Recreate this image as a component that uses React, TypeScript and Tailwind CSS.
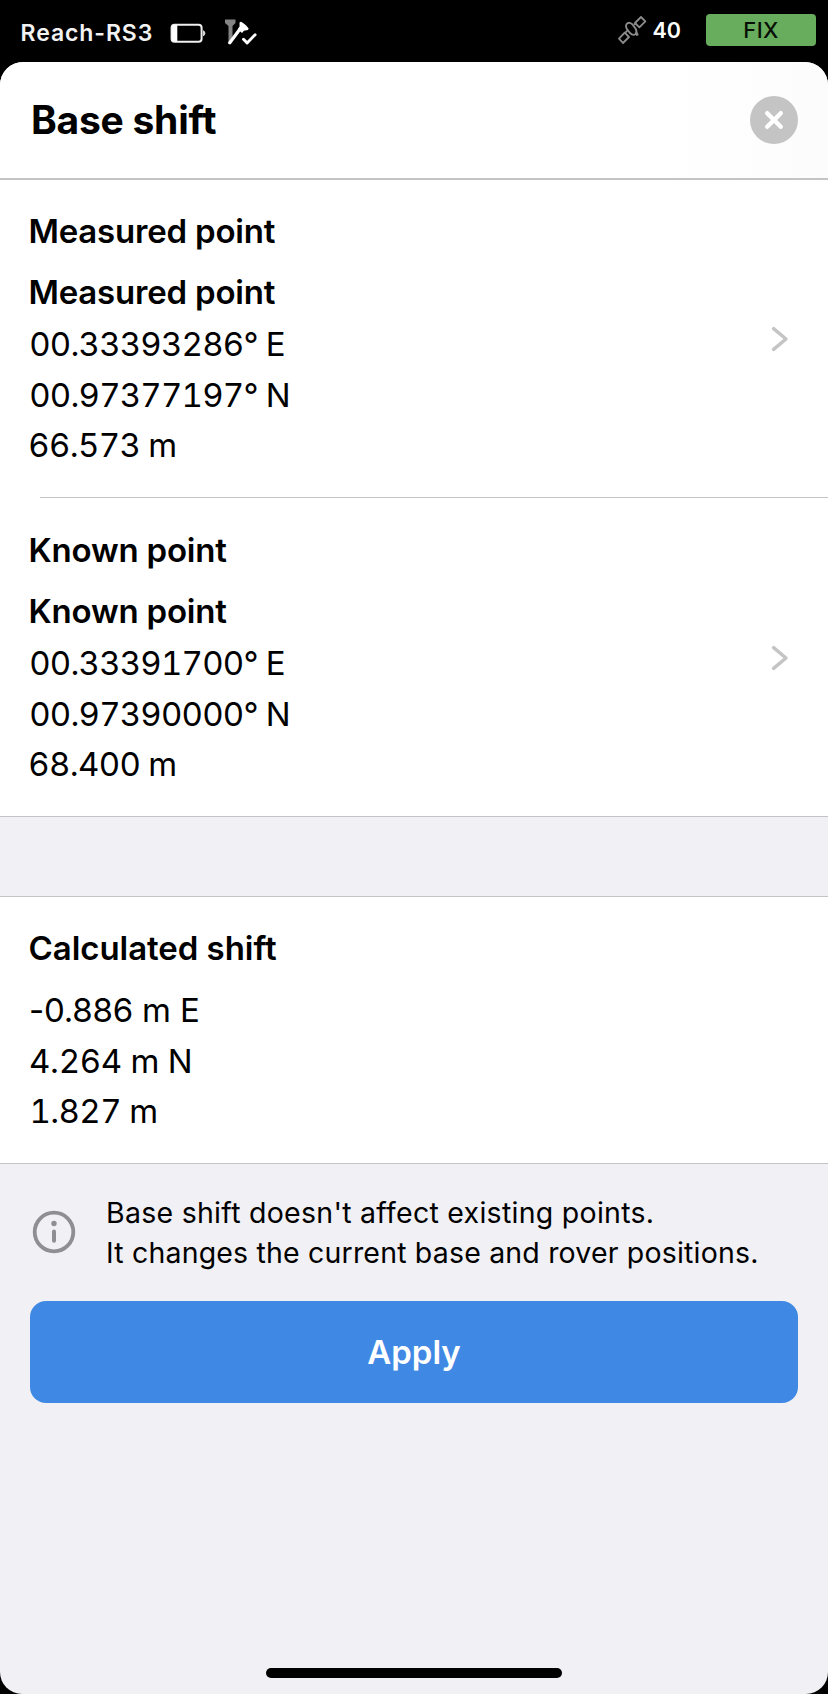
import React from "react";

function BatteryIcon() {
  return (
    <svg className="ml-[17px] h-[20px] w-[36px]" viewBox="0 0 36 20" fill="none">
      <rect x="1.6" y="1.8" width="30" height="17" rx="3" stroke="#f0f0f0" strokeWidth="2" />
      <path d="M4 2h3.300v16.500H4a2 2 0 0 1-2-2V4a2 2 0 0 1 2-2Z" fill="#fff" />
      <path d="M33 7.200c1.600.5 2.300 1.600 2.300 3s-.7 2.500-2.300 3Z" fill="#d8d8d8" />
    </svg>
  );
}

function SurveyIcon() {
  return (
    <svg className="ml-[18px] h-[28px] w-[34px]" viewBox="0 0 34 28" fill="none">
      <path d="M1 2.500h10.500v3.500l-3 3v13l-4 5V9L1 6Z" fill="#858585" />
      <path d="M5.800 25.800 16 12" stroke="#fff" strokeWidth="3.200" strokeLinecap="round" />
      <path d="M16.800 4.800c1.800.4 6.800 4.600 7.900 7l-.8 1.300-4 .6-1.800 2.300-4.300-3.600 1.800-3.200-.1-3.600Z" fill="#fff" />
      <path d="m19.500 22.300 3.600 3.600 8-8.200" stroke="#fff" strokeWidth="2.900" strokeLinecap="round" strokeLinejoin="round" />
    </svg>
  );
}

function SatelliteIcon() {
  return (
    <svg className="h-[30px] w-[30px]" viewBox="80 45 90 90" fill="none" stroke="#8c8c8c" strokeWidth="5.500" strokeLinejoin="round">
      <path d="m152 51 13 13-18 18-13-13Z" />
      <path d="m103 98 13 13-18 18-12-13Z" />
      <path d="M109 72c5-6 13-4 18 2l8 11c4 6 4 13 1 17-5 4-12 2-17-3l-8-10c-4-6-5-13-2-17Z" />
      <path d="m131 74 7-4M111 92l-6 6M139 98l3 6-5 1" />
    </svg>
  );
}

function Chevron() {
  return (
    <svg className="mr-[38px] h-[28px] w-[20px]" viewBox="0 0 20 28" fill="none">
      <path d="M3.600 3.600 16 14 3.600 24.400" stroke="#c4c4c4" strokeWidth="3.400" strokeLinecap="round" strokeLinejoin="round" />
    </svg>
  );
}

function PointDetails({ title, lines }: { title: string; lines: string[] }) {
  return (
    <div className="flex flex-1 flex-col pl-[28.500px]">
      <h2 className="text-[33px] leading-[40px] font-semibold tracking-[-0.2px]">{title}</h2>
      <h3 className="mt-[21px] text-[33px] leading-[40px] font-semibold tracking-[-0.2px]">{title}</h3>
      <div className="mt-[6.500px] pl-[0.700px] text-[33px] tracking-[-0.780px] tabular-nums">
        {lines.map((line) => (
          <p key={line} className="leading-[51px] last:-ml-px last:leading-[49px] last:tracking-[-0.650px]">{line}</p>
        ))}
      </div>
    </div>
  );
}

export default function App() {
  return (
    <div className="flex h-[1694px] w-[828px] flex-col overflow-hidden bg-black font-['Inter',sans-serif] text-black">
      <header className="flex h-[62px] shrink-0 items-start">
        <span className="mt-[19px] ml-[20.500px] text-[23px] leading-[28px] font-semibold tracking-[0.920px] text-[#f2f2f2]">Reach-RS3</span>
        <div className="mt-[23px]"><BatteryIcon /></div>
        <div className="mt-[17px]"><SurveyIcon /></div>
        <div className="mt-[15px] ml-auto"><SatelliteIcon /></div>
        <span className="mt-[16px] ml-[5.500px] w-[53.500px] text-[21.500px] leading-[28px] font-semibold text-white">40</span>
        <div className="mt-[14px] mr-[12px] flex h-[32px] w-[110px] items-center justify-center rounded-[4px] bg-[#68ac5d] text-[22px] leading-[32px] font-medium tracking-[0.3px] text-[#081005]">FIX</div>
      </header>

      <main className="flex flex-1 flex-col overflow-hidden rounded-t-[23px] rounded-b-[22px] bg-[#f1f0f5]">
        <div className="flex h-[118px] shrink-0 items-center justify-between border-b-2 border-[#c4c4c4] bg-linear-to-r from-white from-80% to-[#fcfcfc] pr-[30px] pl-[31px]">
          <h1 className="text-[39px] leading-[48px] font-bold tracking-[-0.250px]">Base shift</h1>
          <button aria-label="Close" className="flex size-[48px] items-center justify-center rounded-full bg-[#c4c4c4]">
            <svg className="size-[20px]" viewBox="0 0 20 20" fill="none">
              <path d="m3.200 3.200 13.600 13.600M16.800 3.200 3.200 16.800" stroke="#fff" strokeWidth="4.400" strokeLinecap="round" />
            </svg>
          </button>
        </div>

        <section className="flex h-[317px] shrink-0 bg-white pt-[31px]">
          <PointDetails title="Measured point" lines={["00.33393286° E", "00.97377197° N", "66.573 m"]} />
          <div className="mt-[114px]"><Chevron /></div>
        </section>
        <div className="h-px shrink-0 bg-white pl-[40px]"><div className="h-px bg-[#c4c4c6]" /></div>
        <section className="flex h-[319px] shrink-0 border-b border-[#c4c4c8] bg-white pt-[32px]">
          <PointDetails title="Known point" lines={["00.33391700° E", "00.97390000° N", "68.400 m"]} />
          <div className="mt-[114px]"><Chevron /></div>
        </section>

        <section className="mt-[79px] h-[268px] shrink-0 border-y border-[#c4c4c8] bg-white pt-[31px] pl-[28.500px]">
          <h2 className="text-[33px] leading-[40px] font-semibold tracking-[-0.050px]">Calculated shift</h2>
          <div className="mt-[16.500px] pl-[0.500px] text-[33px]">
            <p className="leading-[51px] tracking-[-0.2px]">-0.886 m E</p>
            <p className="leading-[51px] tracking-[-0.3px] tabular-nums">4.264 m N</p>
            <p className="pl-[0.500px] leading-[49px] tracking-[-0.6px] tabular-nums">1.827 m</p>
          </div>
        </section>

        <div className="mt-[29px] flex h-[80px] shrink-0 items-center pl-[32px]">
          <svg className="mt-[-2px] size-[44px]" viewBox="0 0 44 44" fill="none">
            <circle cx="22" cy="22" r="19.300" stroke="#8e8e93" strokeWidth="3.800" />
            <circle cx="22" cy="13.500" r="2.700" fill="#8e8e93" />
            <path d="M22 21.500v9.200" stroke="#8e8e93" strokeWidth="4" strokeLinecap="round" />
          </svg>
          <p className="ml-[30px] text-[28.500px] leading-[40px] tracking-[0.180px]">
            <span className="tracking-[0.270px]">Base shift doesn't affect existing points.</span>
            <br />
            It changes the current base and rover positions.
          </p>
        </div>

        <button className="mx-[30px] mt-[28px] flex h-[102px] shrink-0 items-center justify-center rounded-[16px] bg-[#3f89e5] text-[33px] leading-[40px] font-semibold text-white">
          Apply
        </button>
        <div className="mt-auto mb-[16px] h-[10px] w-[296px] shrink-0 self-center rounded-full bg-black" />
      </main>
    </div>
  );
}
